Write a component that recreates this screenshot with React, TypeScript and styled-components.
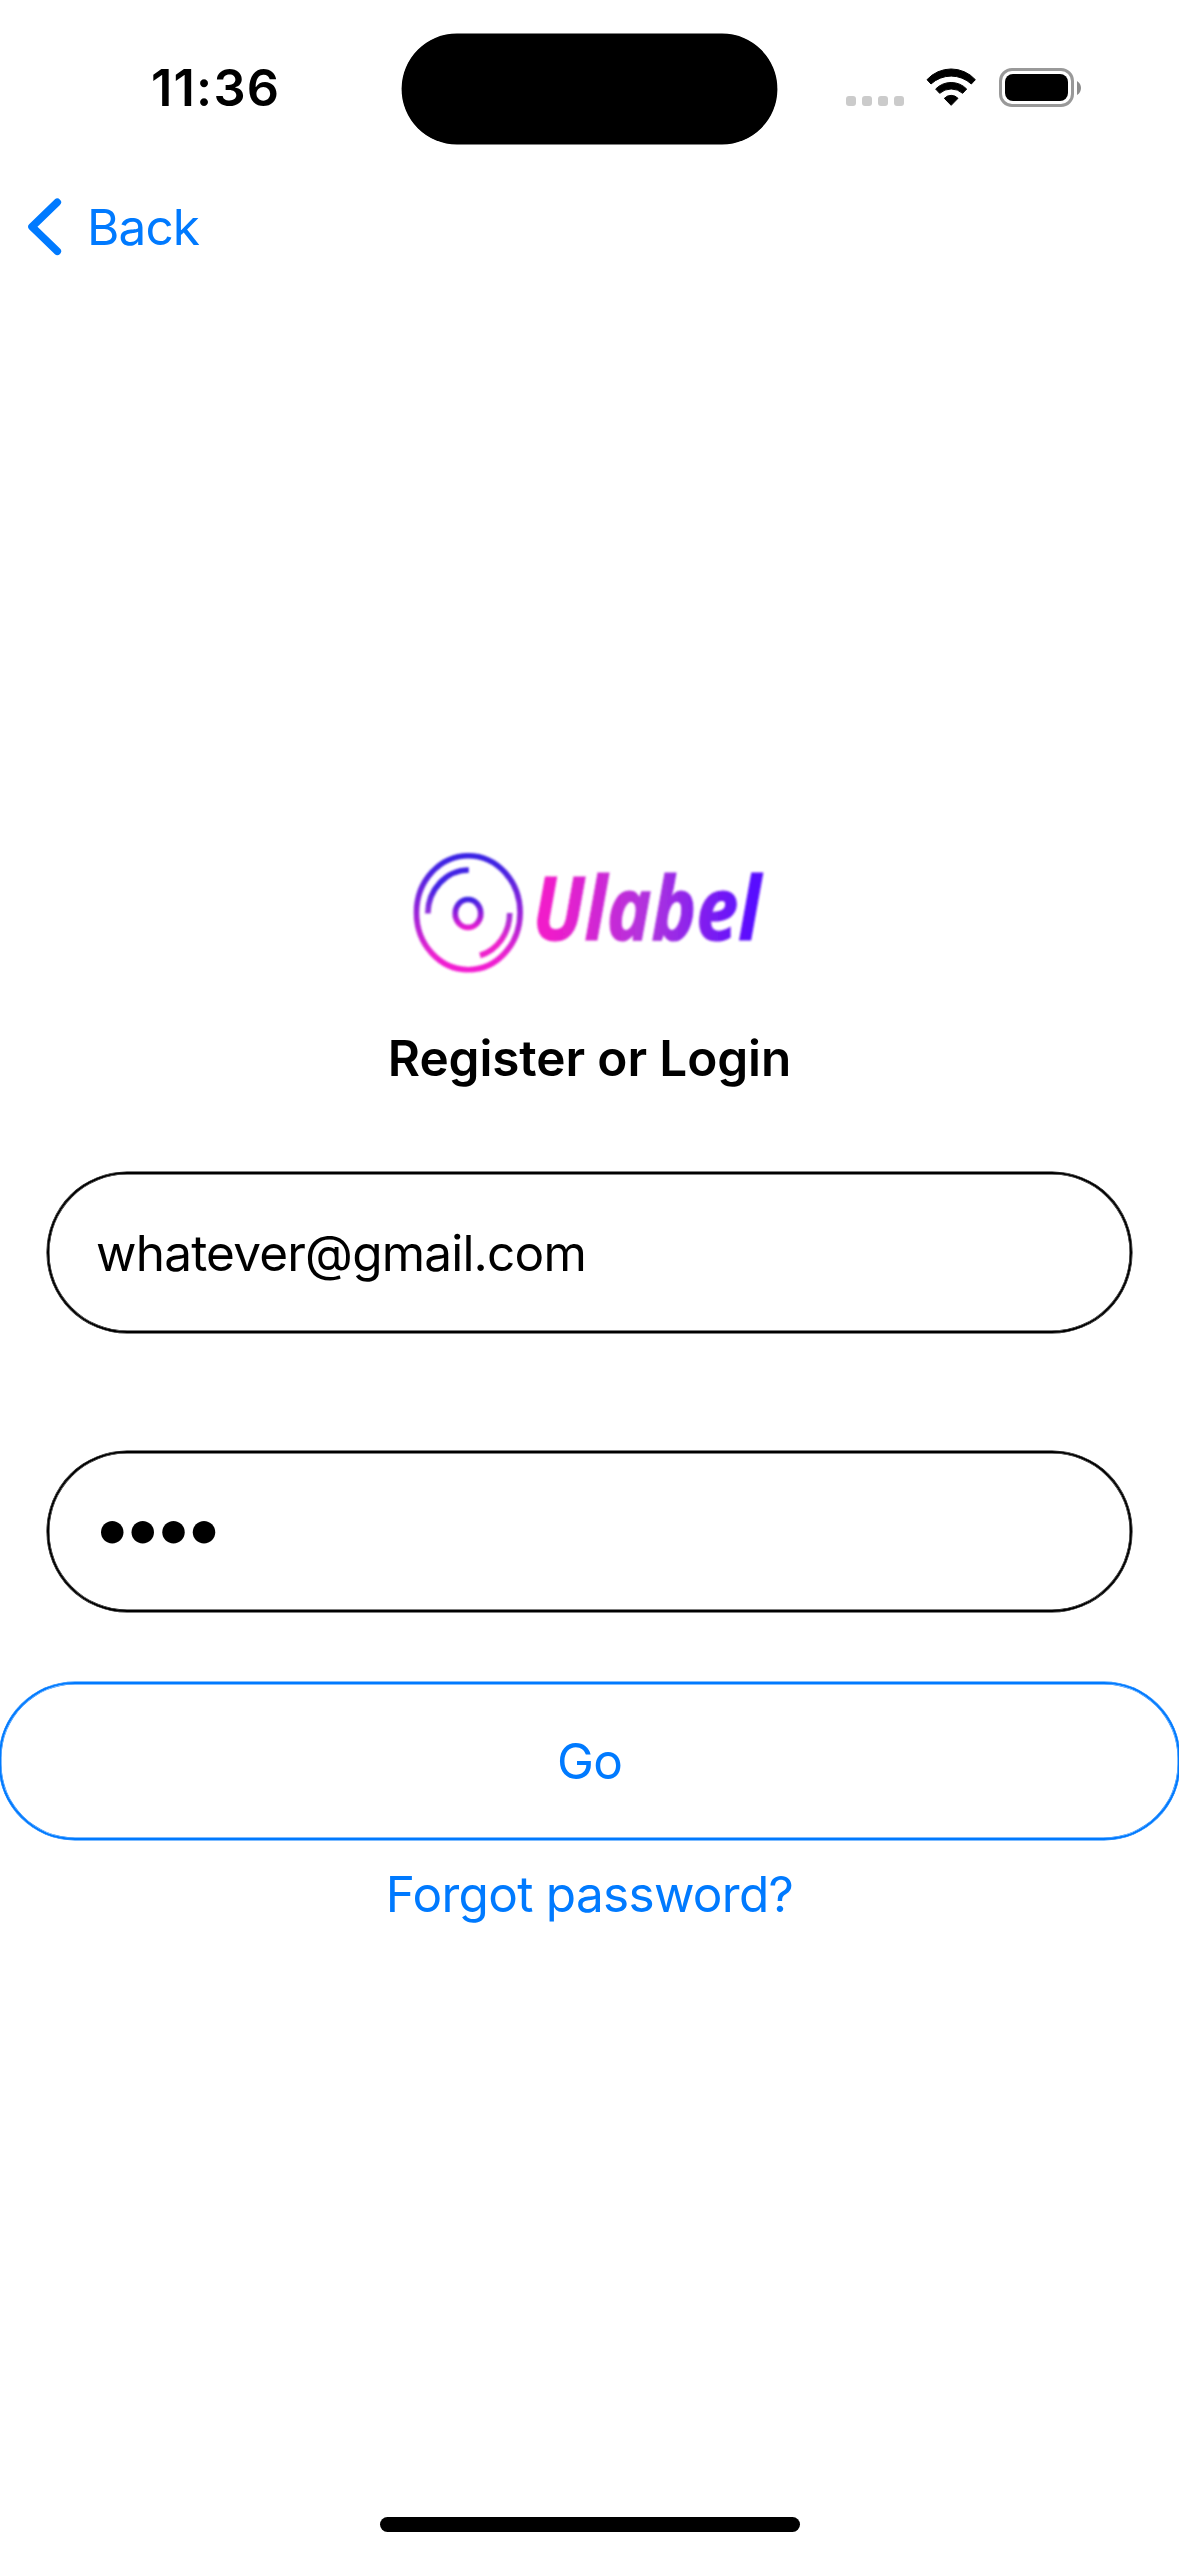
import React from "react";
import styled, { createGlobalStyle } from "styled-components";

const blue = "#007aff";

const GlobalStyle = createGlobalStyle`
  *, *::before, *::after { box-sizing: border-box; }
  body { margin: 0; background: #fff; }
`;

const Screen = styled.main`
  display: flex;
  flex-direction: column;
  width: 1179px;
  height: 2556px;
  overflow: hidden;
  background: #fff;
  color: #000;
  font-family: Inter, "Liberation Sans", sans-serif;
  font-size: 49.5px;
  line-height: 60px;
`;

const StatusBar = styled.header`
  display: grid;
  grid-template-columns: 402px 375px 402px;
  align-items: start;
  height: 177px;
  padding-top: 34px;
`;

const Clock = styled.time`
  padding: 24px 0 0 151px;
  font-size: 50.5px;
  font-weight: 600;
  letter-spacing: 1.2px;
  white-space: nowrap;
`;

const Island = styled.div`
  height: 110px;
  border-radius: 55px;
  background: #000;
  box-shadow: 0 0 0 0.4px #000;
`;

const StatusIcons = styled.div`
  display: flex;
  align-items: flex-start;
  padding: 34px 0 0 69px;
`;

const SignalDots = styled.div`
  display: flex;
  gap: 6px;
  margin: 28px 21px 0 0;
`;

const SignalDot = styled.i`
  width: 10px;
  height: 10px;
  border-radius: 3px;
  background: #cbcbcb;
`;

const Battery = styled.div`
  display: flex;
  align-items: center;
  gap: 3px;
  margin-left: 22px;
`;

const BatteryShell = styled.div`
  width: 75px;
  height: 39px;
  padding: 3px;
  border: 3px solid #999;
  border-radius: 13px;
`;

const BatteryLevel = styled.div`
  height: 27px;
  border-radius: 8px;
  background: #000;
`;

const NavBar = styled.nav`
  display: flex;
  align-items: flex-start;
  height: 132px;
  padding: 17px 0 0 24px;
`;

const BackButton = styled.button`
  display: flex;
  align-items: center;
  gap: 18px;
  padding: 0;
  border: 0;
  background: none;
  color: ${blue};
  font: inherit;
  letter-spacing: -0.9px;
`;

const Content = styled.section`
  display: flex;
  flex-direction: column;
  align-items: center;
  padding-top: 531px;
`;

const Title = styled.h1`
  margin: 40px 0 0;
  font-size: 49.5px;
  font-weight: 600;
  letter-spacing: -0.1px;
  line-height: 60px;
`;

const Field = styled.div<{ $gap: number }>`
  display: flex;
  align-items: center;
  width: 1085px;
  height: 161px;
  margin-top: ${(p) => p.$gap}px;
  padding: 1px 0 0 47px;
  border: 2px solid #000;
  border-radius: 80px;
  box-shadow: 0 0 0 0.5px #000, inset 0 0 0 0.5px #000;
  letter-spacing: -0.8px;
`;

const Mask = styled.span`
  margin: -10px 0 0 -4px;
  font-size: 72px;
  letter-spacing: -9.9px;
`;

const GoButton = styled.button`
  display: flex;
  flex-shrink: 0;
  align-items: center;
  justify-content: center;
  width: 1181px;
  height: 158px;
  margin: 70px -1px 0;
  padding: 0;
  border: 2px solid ${blue};
  border-radius: 76px;
  box-shadow: 0 0 0 0.5px ${blue}, inset 0 0 0 0.5px ${blue};
  background: none;
  color: ${blue};
  font: inherit;
  letter-spacing: -0.9px;
`;

const ForgotLink = styled.a`
  margin-top: 24px;
  color: ${blue};
  letter-spacing: -0.7px;
`;

const HomeIndicator = styled.div`
  width: 420px;
  height: 15px;
  margin: auto auto 24px;
  border-radius: 8px;
  background: #000;
`;

const LogoArt = styled.svg`
  display: block;
  overflow: visible;
`;

const Wifi = () => (
  <svg width="52" height="39" viewBox="316 84 156 117">
    <g stroke="#000" strokeWidth="3" strokeLinejoin="round">
      <path d="M322 119A98 98 0 0 1 467 119L455 132A89 89 0 0 0 334 132Z" />
      <path d="M348 147A65 65 0 0 1 441 147L429 160A52 52 0 0 0 360 160Z" />
      <path d="M374 175A28 28 0 0 1 415 175L394.500 196Z" />
    </g>
  </svg>
);

const Chevron = () => (
  <svg width="45" height="66" viewBox="24 194 45 66" fill="none" stroke={blue} strokeWidth="7.6" strokeLinecap="round" strokeLinejoin="round">
    <path d="M57.300 202.300L32 226.800L57.300 251.300" />
  </svg>
);

const Logo = () => (
  <LogoArt width="369" height="148" viewBox="405 840 369 148">
    <defs>
      <linearGradient id="disc" x1="0" y1="855" x2="0" y2="972" gradientUnits="userSpaceOnUse">
        <stop offset="0" stopColor="#3820e4" />
        <stop offset="0.12" stopColor="#4422e2" />
        <stop offset="0.85" stopColor="#ea20cf" />
        <stop offset="1" stopColor="#f41fd2" />
      </linearGradient>
      <linearGradient id="hub" x1="0" y1="897" x2="0" y2="930" gradientUnits="userSpaceOnUse">
        <stop offset="0.05" stopColor="#3a20e4" />
        <stop offset="1" stopColor="#f41fd0" />
      </linearGradient>
      <linearGradient id="upper" x1="0" y1="870" x2="0" y2="913" gradientUnits="userSpaceOnUse">
        <stop offset="0.4" stopColor="#4020e4" />
        <stop offset="1" stopColor="#9430dc" />
      </linearGradient>
      <linearGradient id="lower" x1="0" y1="913" x2="0" y2="956" gradientUnits="userSpaceOnUse">
        <stop offset="0" stopColor="#9f35d8" />
        <stop offset="0.7" stopColor="#ee20cc" />
      </linearGradient>
      <linearGradient id="word" x1="537" y1="0" x2="763" y2="0" gradientUnits="userSpaceOnUse">
        <stop offset="0.05" stopColor="#f01cca" />
        <stop offset="0.5" stopColor="#ae33de" />
        <stop offset="0.95" stopColor="#590dff" />
      </linearGradient>
      <filter id="soft">
        <feGaussianBlur stdDeviation="0.8" />
      </filter>
    </defs>
    <g fill="none" strokeWidth="5.600" filter="url(#soft)">
      <ellipse cx="468.300" cy="912.700" rx="51.800" ry="57" stroke="url(#disc)" />
      <ellipse cx="468" cy="913.500" rx="12.800" ry="14" stroke="url(#hub)" />
      <path d="M427.800 913.500A41 44 0 0 1 468.800 870" stroke="url(#upper)" />
      <path d="M509.700 913A41 44 0 0 1 480 955.500" stroke="url(#lower)" />
    </g>
    <text
      x="532.500"
      y="939.500"
      textLength="228"
      lengthAdjust="spacingAndGlyphs"
      fontFamily='"Open Sans", "Noto Sans", sans-serif'
      fontSize="88"
      fontWeight="700"
      fontStyle="italic"
      fill="url(#word)"
      stroke="url(#word)"
      strokeWidth="1.200"
      filter="url(#soft)"
    >
      Ulabel
    </text>
  </LogoArt>
);

export default function App() {
  return (
    <>
      <GlobalStyle />
      <Screen>
        <StatusBar>
          <Clock>11:36</Clock>
          <Island />
          <StatusIcons>
            <SignalDots>
              {[0, 1, 2, 3].map((n) => (
                <SignalDot key={n} />
              ))}
            </SignalDots>
            <Wifi />
            <Battery>
              <BatteryShell>
                <BatteryLevel />
              </BatteryShell>
              <svg width="5" height="14" viewBox="0 0 5 14">
                <path d="M0 0Q4 2.500 4 7T0 14Z" fill="#8c8c8c" />
              </svg>
            </Battery>
          </StatusIcons>
        </StatusBar>
        <NavBar>
          <BackButton>
            <Chevron />
            Back
          </BackButton>
        </NavBar>
        <Content>
          <Logo />
          <Title>Register or Login</Title>
          <Field $gap={84}>whatever@gmail.com</Field>
          <Field $gap={118}>
            <Mask>••••</Mask>
          </Field>
          <GoButton>Go</GoButton>
          <ForgotLink>Forgot password?</ForgotLink>
        </Content>
        <HomeIndicator />
      </Screen>
    </>
  );
}
